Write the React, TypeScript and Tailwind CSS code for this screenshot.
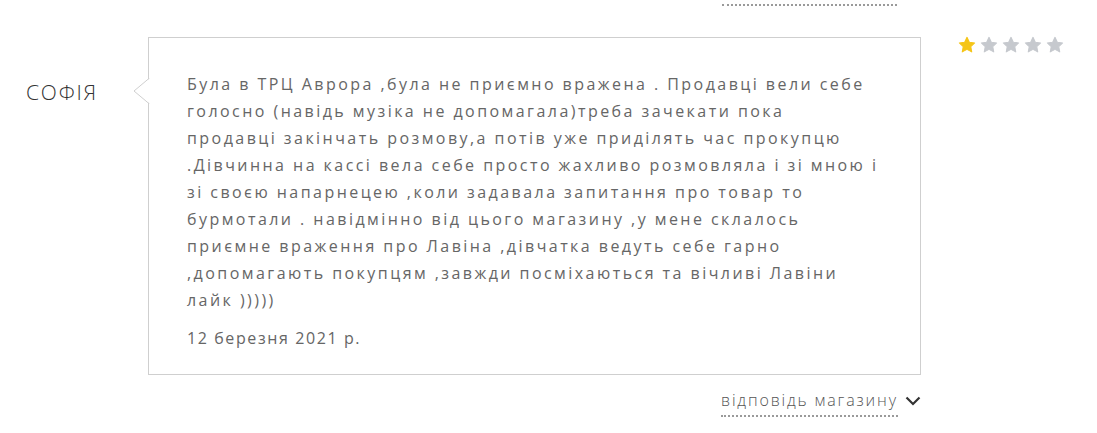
const lines = [
  'Була в ТРЦ Аврора ,була не приємно вражена . Продавці вели себе',
  'голосно (навідь музіка не допомагала)треба зачекати пока',
  'продавці закінчать розмову,а потів уже приділять час прокупцю',
  '.Дівчинна на кассі вела себе просто жахливо розмовляла і зі мною і',
  'зі своєю напарнецею ,коли задавала запитання про товар то',
  'бурмотали . навідмінно від цього магазину ,у мене склалось',
  'приємне враження про Лавіна ,дівчатка ведуть себе гарно',
  ',допомагають покупцям ,завжди посміхаються та вічливі Лавіни',
  'лайк )))))',
]

function Star({ filled }: { filled: boolean }) {
  return (
    <svg viewBox="0 0 24 24" className="w-[18px] h-[18px]">
      <path
        d="M12 1.8l3.1 6.5 7.1.9-5.2 4.9 1.3 7.1L12 17.8l-6.3 3.4 1.3-7.1-5.2-4.9 7.1-.9z"
        fill={filled ? '#f5c518' : '#c6c9ce'}
        stroke={filled ? '#f5c518' : '#c6c9ce'}
        strokeWidth="1.4"
        strokeLinejoin="round"
      />
    </svg>
  )
}

export default function App() {
  const rating = 1
  return (
    <div
      className="w-[1097px] h-[433px] overflow-hidden bg-white"
      style={{ fontFamily: '"Open Sans", "Noto Sans", sans-serif' }}
    >
      {/* previous review's reply link underline */}
      <div className="ml-[722px] w-[175px] h-[6px] border-b-2 border-dotted border-[#9a9a9a]" />

      <div className="flex mt-[31px]">
        <div className="w-[148px] pl-[26px] pt-[40px]">
          <span className="text-[21px] font-light tracking-[1.8px] text-[#333]">СОФІЯ</span>
        </div>

        <div className="relative w-[773px] h-[338px] border border-[#cfcfcf] pl-[38px] pt-[33px]">
          <svg
            className="absolute left-[-16px] top-[40px]"
            width="17"
            height="26"
            viewBox="0 0 17 26"
          >
            <polygon points="17,0 1,13 17,26" fill="#fff" />
            <polyline points="16.5,0 1,13 16.5,26" fill="none" stroke="#cfcfcf" strokeWidth="1" />
          </svg>
          <div className="text-[16px] leading-[27px] tracking-[2.45px] text-[#666]">
            {lines.map((l, i) => (
              <div key={i} className="whitespace-nowrap">
                {l}
              </div>
            ))}
          </div>
          <div className="mt-[11px] text-[16px] leading-[27px] tracking-[1.6px] text-[#666]">
            12 березня 2021 р.
          </div>
        </div>

        <div className="pl-[37px] flex gap-[4px] h-fit mt-[-1px]">
          {[1, 2, 3, 4, 5].map((n) => (
            <Star key={n} filled={n <= rating} />
          ))}
        </div>
      </div>

      <div className="flex items-center ml-[721px] mt-[13px] w-[200px]">
        <span className="text-[16px] font-light tracking-[1.85px] text-[#555] border-b-2 border-dotted border-[#9a9a9a] leading-[24px] pb-[3px]">
          відповідь магазину
        </span>
        <svg className="ml-[7px] mt-[-4px]" width="16" height="10" viewBox="0 0 16 10">
          <polyline points="1.5,1.5 8,8 14.5,1.5" fill="none" stroke="#333" strokeWidth="2.2" />
        </svg>
      </div>
    </div>
  )
}
